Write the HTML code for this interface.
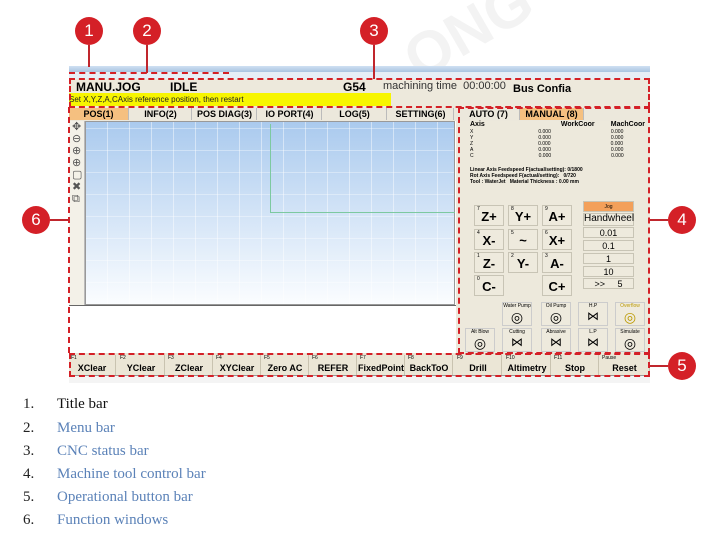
<!DOCTYPE html>
<html><head><meta charset="utf-8"><style>
*{margin:0;padding:0;box-sizing:border-box}
body{width:724px;height:559px;background:#fff;position:relative;overflow:hidden;font-family:"Liberation Sans",sans-serif}
.a{position:absolute}
.c{position:absolute;width:28px;height:28px;border-radius:50%;background:#d42027;color:#fff;font-size:17px;text-align:center;line-height:28px}
.ln{position:absolute;background:#c0262d}
.dash{position:absolute;border:2px dashed #d42027}
.tab{position:absolute;top:108px;height:12px;font:bold 9px "Liberation Sans Narrow","Liberation Sans",sans-serif;text-align:center;line-height:12px;background:#ece8dc;border-right:1px solid #bbb}
.k{position:absolute;width:30px;height:21px;background:#eeeadd;border:1px solid #c8c4b5;font-weight:bold;font-size:13px;text-align:center;line-height:22px}
.k i{position:absolute;left:2px;top:-8px;font-style:normal;font-size:5px;font-weight:normal}
.hw{position:absolute;left:583px;width:51px;height:11px;background:#eeeadd;border:1px solid #c8c4b5;font-size:9px;text-align:center;line-height:10px}
.fb{position:absolute;top:355px;height:20px;width:47px;background:#ebe6d6;border-right:1px solid #c9c3b0;font:bold 9px "Liberation Sans Narrow","Liberation Sans",sans-serif;text-align:center;padding-top:8px}
.fb i{position:absolute;left:2px;top:0;font-size:5px;font-style:normal;font-weight:normal}
.ic{position:absolute;width:30px;height:24px;background:#eeeadd;border:1px solid #ccc;font-size:5px;text-align:center}
.li{position:absolute;left:23px;font:15px "Liberation Serif",serif;color:#222}
.li span{position:absolute;left:34px;color:#5b82b8;white-space:nowrap}
</style></head><body>
<div class="a" style="left:400px;top:-5px;font-size:60px;color:#f3f3f3;transform:rotate(-30deg);font-weight:bold">ONG</div>
<!-- screen -->
<div class="a" style="left:69px;top:66px;width:581px;height:6px;background:linear-gradient(#cfe0f2,#a9c4e0)"></div>
<div class="a" style="left:69px;top:72px;width:581px;height:7px;background:#e6eef7"></div>
<div class="a" style="left:69px;top:79px;width:581px;height:28px;background:#ede9dc"></div>
<div class="a" style="left:76px;top:80px;font-weight:bold;font-size:12px">MANU.JOG</div>
<div class="a" style="left:170px;top:80px;font-weight:bold;font-size:12px">IDLE</div>
<div class="a" style="left:343px;top:80px;font-weight:bold;font-size:12px">G54</div>
<div class="a" style="left:383px;top:80px;font-size:11px;color:#333">machining time &nbsp;00:00:00</div>
<div class="a" style="left:513px;top:83px;font-weight:bold;font-size:11px">Bus Confia</div>
<div class="a" style="left:69px;top:93px;width:322px;height:13px;background:#f7f500;font-size:8px;line-height:13px;color:#222">Set X,Y,Z,A,CAxis reference position, then restart</div>
<div class="a" style="left:69px;top:107px;width:581px;height:14px;background:#ece8dc"></div>
<div class="tab" style="left:69px;width:60px;background:#f5c080">POS(1)</div>
<div class="tab" style="left:130px;width:62px">INFO(2)</div>
<div class="tab" style="left:193px;width:64px">POS DIAG(3)</div>
<div class="tab" style="left:258px;width:64px">IO PORT(4)</div>
<div class="tab" style="left:323px;width:64px">LOG(5)</div>
<div class="tab" style="left:388px;width:66px">SETTING(6)</div>
<div class="tab" style="left:458px;width:62px">AUTO (7)</div>
<div class="tab" style="left:520px;width:64px;background:#f5c080">MANUAL (8)</div>
<div class="a" style="left:69px;top:121px;width:16px;height:184px;background:#f3f1e8;border-right:1px solid #bbb;font-size:11px;line-height:12px;color:#555;padding-left:3px">✥<br>⊖<br>⊕<br>⊕<br>▢<br>✖<br>⧉</div>
<div class="a" style="left:85px;top:121px;width:370px;height:184px;border:1px solid #999;background-image:repeating-linear-gradient(90deg,transparent 0 21px,rgba(255,255,255,.45) 21px 22px),repeating-linear-gradient(0deg,transparent 0 21px,rgba(255,255,255,.35) 21px 22px),linear-gradient(#aacaee,#fbfdff)"></div>
<div class="a" style="left:270px;top:124px;width:1px;height:88px;background:#7dc9a0"></div>
<div class="a" style="left:270px;top:212px;width:185px;height:1px;background:#7dc9a0"></div>
<div class="a" style="left:69px;top:305px;width:387px;height:48px;background:#fff;border-top:1px solid #666"></div>
<div class="a" style="left:456px;top:121px;width:194px;height:232px;background:#ede9dc"></div>
<div class="a" style="left:470px;top:122px;font:bold 7px sans-serif;line-height:6.5px;width:175px">
<div style="display:flex;justify-content:space-between"><span>Axis</span><span style="margin-left:60px">WorkCoor</span><span>MachCoor</span></div>
<div style="font-weight:normal;font-size:5px;line-height:6px">X<span style="margin-left:65px">0.000</span><span style="margin-left:60px">0.000</span><br>Y<span style="margin-left:65px">0.000</span><span style="margin-left:60px">0.000</span><br>Z<span style="margin-left:65px">0.000</span><span style="margin-left:60px">0.000</span><br>A<span style="margin-left:65px">0.000</span><span style="margin-left:60px">0.000</span><br>C<span style="margin-left:65px">0.000</span><span style="margin-left:60px">0.000</span></div>
<div style="font-size:5px;margin-top:8px;line-height:6px">Linear Axis Feedspeed F(actual/setting): 0/1800<br>Rot Axis Feedspeed F(actual/setting): &nbsp; 0/720<br>Tool : WaterJet &nbsp; Material Thickness : 0.00 mm</div></div>
<div class="k" style="left:474px;top:205px"><i>7</i>Z+</div><div class="k" style="left:508px;top:205px"><i>8</i>Y+</div><div class="k" style="left:542px;top:205px"><i>9</i>A+</div>
<div class="k" style="left:474px;top:229px"><i>4</i>X-</div><div class="k" style="left:508px;top:229px"><i>5</i>~</div><div class="k" style="left:542px;top:229px"><i>6</i>X+</div>
<div class="k" style="left:474px;top:252px"><i>1</i>Z-</div><div class="k" style="left:508px;top:252px"><i>2</i>Y-</div><div class="k" style="left:542px;top:252px"><i>3</i>A-</div>
<div class="k" style="left:474px;top:275px"><i>0</i>C-</div><div class="k" style="left:542px;top:275px">C+</div>
<div class="hw" style="top:201px;background:#f3a05a;font-size:5px">Jog</div>
<div class="hw" style="top:213px;font-size:10px;height:13px">Handwheel</div>
<div class="hw" style="top:227px">0.01</div><div class="hw" style="top:240px">0.1</div><div class="hw" style="top:253px">1</div><div class="hw" style="top:266px">10</div>
<div class="hw" style="top:278px">&gt;&gt; &nbsp;&nbsp;&nbsp; 5</div>
<div class="ic" style="left:502px;top:302px">Water Pump<br><span style="font-size:14px">◎</span></div>
<div class="ic" style="left:541px;top:302px">Oil Pump<br><span style="font-size:14px">◎</span></div>
<div class="ic" style="left:578px;top:302px">H.P<br><span style="font-size:12px">⋈</span></div>
<div class="ic" style="left:615px;top:302px;color:#b90">Overflow<br><span style="font-size:14px">◎</span></div>
<div class="ic" style="left:465px;top:328px">Alt Blow<br><span style="font-size:14px">◎</span></div>
<div class="ic" style="left:502px;top:328px">Cutting<br><span style="font-size:12px">⋈</span></div>
<div class="ic" style="left:541px;top:328px">Abrasive<br><span style="font-size:12px">⋈</span></div>
<div class="ic" style="left:578px;top:328px">L.P<br><span style="font-size:12px">⋈</span></div>
<div class="ic" style="left:615px;top:328px">Simulate<br><span style="font-size:14px">◎</span></div>
<div class="a" style="left:69px;top:353px;width:581px;height:22px;background:#ebe6d6"></div>
<div class="fb" style="left:69px"><i>F1</i>XClear</div><div class="fb" style="left:118px"><i>F2</i>YClear</div><div class="fb" style="left:166px"><i>F3</i>ZClear</div><div class="fb" style="left:214px"><i>F4</i>XYClear</div><div class="fb" style="left:262px"><i>F5</i>Zero AC</div><div class="fb" style="left:310px"><i>F6</i>REFER</div><div class="fb" style="left:358px"><i>F7</i>FixedPoint</div><div class="fb" style="left:406px"><i>F8</i>BackToO</div><div class="fb" style="left:455px"><i>F9</i>Drill</div><div class="fb" style="left:504px"><i>F10</i>Altimetry</div><div class="fb" style="left:552px"><i>F11</i>Stop</div><div class="fb" style="left:600px;width:50px"><i>Pause</i>Reset</div>
<div class="a" style="left:69px;top:375px;width:581px;height:8px;background:#f4f4f4;border-top:1px solid #999"></div>
<!-- dashed -->
<div class="dash" style="left:69px;top:78px;width:581px;height:30px"></div>
<div class="dash" style="left:458px;top:107px;width:192px;height:247px"></div>
<div class="dash" style="left:69px;top:353px;width:581px;height:24px"></div>
<div class="a" style="left:68px;top:107px;height:246px;border-left:2px dashed #d42027"></div>
<div class="a" style="left:69px;top:72px;width:160px;border-top:2px dashed #d42027"></div>
<!-- callouts -->
<div class="c" style="left:75px;top:17px">1</div><div class="ln" style="left:88px;top:45px;width:2px;height:22px"></div>
<div class="c" style="left:133px;top:17px">2</div><div class="ln" style="left:146px;top:45px;width:2px;height:28px"></div>
<div class="c" style="left:360px;top:17px">3</div><div class="ln" style="left:373px;top:45px;width:2px;height:34px"></div>
<div class="c" style="left:22px;top:206px">6</div><div class="ln" style="left:50px;top:219px;width:19px;height:2px"></div>
<div class="c" style="left:668px;top:206px">4</div><div class="ln" style="left:650px;top:219px;width:18px;height:2px"></div>
<div class="c" style="left:668px;top:352px">5</div><div class="ln" style="left:650px;top:365px;width:18px;height:2px"></div>
<!-- list -->
<div class="li" style="top:396px">1.<span style="color:#111">Title bar</span></div>
<div class="li" style="top:420px">2.<span>Menu bar</span></div>
<div class="li" style="top:443px">3.<span>CNC status bar</span></div>
<div class="li" style="top:466px">4.<span>Machine tool control bar</span></div>
<div class="li" style="top:489px">5.<span>Operational button bar</span></div>
<div class="li" style="top:512px">6.<span>Function windows</span></div>
</body></html>
